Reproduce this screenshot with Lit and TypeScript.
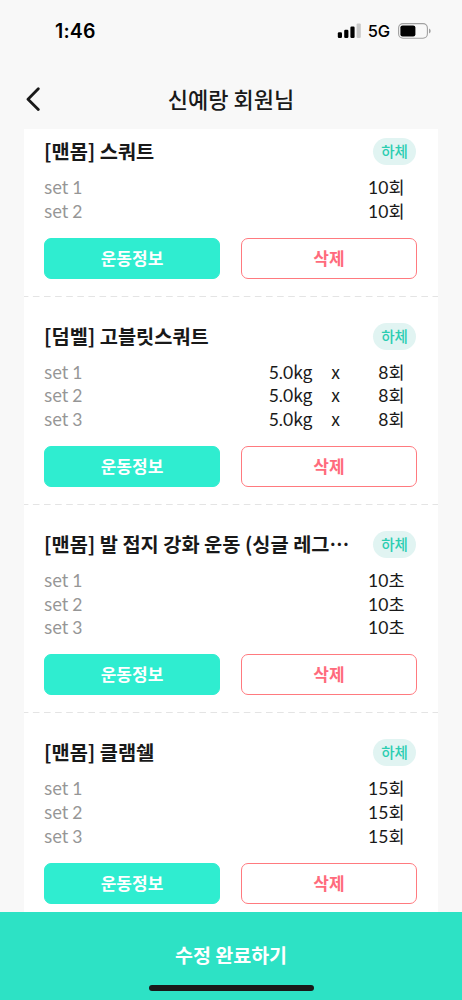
import { LitElement, html, css } from "lit";
import { customElement, property } from "lit/decorators.js";

interface SetRow { weight?: string; count: string; unit: string }
interface Exercise { name: string; tag: string; sets: SetRow[] }

const repeat = (n: number, row: SetRow): SetRow[] => Array.from({ length: n }, () => row);

const EXERCISES: Exercise[] = [
  { name: "[맨몸] 스쿼트", tag: "하체", sets: repeat(2, { count: "10", unit: "회" }) },
  { name: "[덤벨] 고블릿스쿼트", tag: "하체", sets: repeat(3, { weight: "5.0", count: "8", unit: "회" }) },
  { name: "[맨몸] 발 접지 강화 운동 (싱글 레그⋯", tag: "하체", sets: repeat(3, { count: "10", unit: "초" }) },
  { name: "[맨몸] 클램쉘", tag: "하체", sets: repeat(3, { count: "15", unit: "회" }) },
];

@customElement("status-bar")
class StatusBar extends LitElement {
  static styles = css`
    :host { display: flex; height: 62px; align-items: center; padding: 0 31px 0 55px; box-sizing: border-box;
      font-family: Inter, sans-serif; color: #000; }
    .time { font-size: 19.5px; font-weight: 600; flex: 1; letter-spacing: 0.15px; }
    .net { font-size: 16.5px; font-weight: 500; margin: 0 8px 0 7px; letter-spacing: -0.2px; }
    svg { display: block; }
  `;
  render() {
    return html`
      <span class="time">1:46</span>
      <svg width="24" height="16" viewBox="0 0 24 16">
        <rect x="0.8" y="9.3" width="4.2" height="5.7" rx="1.2" />
        <rect x="7.2" y="6.8" width="4.2" height="8.2" rx="1.2" />
        <rect x="13.4" y="3.5" width="4.2" height="11.5" rx="1.2" />
        <rect x="19.6" y="0.4" width="4.2" height="14.6" rx="1.2" fill="#c9c9c9" />
      </svg>
      <span class="net">5G</span>
      <svg width="33" height="16" viewBox="0 0 33 16">
        <rect x="0.6" y="0.6" width="28.8" height="14.6" rx="4.4" fill="none" stroke="#a0a0a0" stroke-width="1.1" />
        <rect x="2.4" y="2.4" width="15" height="11" rx="2.2" />
        <path d="M31 5.4q1.7.8 1.7 2.5T31 10.4z" fill="#a0a0a0" />
      </svg>
    `;
  }
}

@customElement("exercise-item")
class ExerciseItem extends LitElement {
  @property({ attribute: false }) data!: Exercise;
  static styles = css`
    :host { display: block; padding: 26.1px 21px 17px 20px; }
    .head { display: flex; align-items: center; height: 27px; gap: 20px; }
    .name { flex: 1; min-width: 0; white-space: nowrap; font-size: 19.75px; font-weight: 700; line-height: 25px; height: 27px; color: #191919; }
    .tag { width: 43px; height: 27px; margin-right: 1px; border-radius: 14px; background: #e1f4f2; color: #2bcdb1; font-size: 14.5px;
      font-weight: 500; line-height: 25px; text-align: center; }
    .sets { padding: 10px 12.5px 0 0; }
    .row { display: grid; grid-template-columns: 1fr auto 46px 46px; height: 23.55px; line-height: 23.55px; font-size: 17.5px; color: #191919; }
    .num { font-family: Lato, sans-serif; line-height: 1; }
    .label { color: #969696; }
    .x { text-align: center; }
    .amount { text-align: right; }
    .actions { display: grid; grid-template-columns: 1fr 1fr; gap: 21px; margin-top: 15.6px; }
    .btn { box-sizing: border-box; height: 41px; border-radius: 7px; font: inherit; font-size: 17px; font-weight: 700;
      padding: 0 0 2px; border: 1px solid #2fedd0; background: #2fedd0; color: #fff; line-height: 37px; }
    .btn.delete { border-color: #ff7a7f; background: #fff; color: #ff6b7c; }
  `;
  render() {
    const { name, tag, sets } = this.data;
    return html`
      <div class="head"><span class="name">${name}</span><span class="tag">${tag}</span></div>
      <div class="sets">
        ${sets.map((s, i) => html`<div class="row">
          <span class="label">set <span class="num">${i + 1}</span></span>
          <span>${s.weight ? html`<span class="num">${s.weight}</span>kg` : ""}</span>
          <span class="x">${s.weight ? "x" : ""}</span>
          <span class="amount"><span class="num">${s.count}</span>${s.unit}</span>
        </div>`)}
      </div>
      <div class="actions"><button class="btn">운동정보</button><button class="btn delete">삭제</button></div>
    `;
  }
}

@customElement("app-root")
class AppRoot extends LitElement {
  static styles = css`
    :host { display: flex; flex-direction: column; height: 1000px; overflow: hidden; background: #f8f8f8;
      font-family: "Noto Sans CJK KR", sans-serif; color: #191919; }
    .header { display: grid; grid-template-columns: 40px 1fr 40px; align-items: center; height: 67px; padding-top: 5px; box-sizing: border-box; }
    .back { justify-self: end; margin-top: 2px; }
    .title { text-align: center; font-size: 22px; font-weight: 500; line-height: 30px; margin-bottom: 1px; }
    .list { flex: 1; min-height: 0; overflow: hidden; margin: 0 24px; background: #fff; }
    .list exercise-item:first-of-type { padding-top: 9px; }
    .divider { display: block; }
    .footer { height: 88px; box-sizing: border-box; background: #2de2c5; display: flex; flex-direction: column; align-items: center; }
    .submit { font-size: 19.5px; font-weight: 700; line-height: 28px; color: #fff; margin-top: 29px; }
    .home { width: 165px; height: 6px; border-radius: 3px; background: #191919; margin-top: 15.5px; }
  `;
  render() {
    return html`
      <status-bar></status-bar>
      <div class="header">
        <svg class="back" width="16" height="26" viewBox="0 0 16 26" fill="none" stroke="#191919" stroke-width="2.8" stroke-linecap="round" stroke-linejoin="round">
          <path d="M14.3 2.8 4 13.2l10.3 10.4" />
        </svg>
        <span class="title">신예랑 회원님</span>
      </div>
      <div class="list">
        ${EXERCISES.map((e, i) => html`
          ${i ? html`<svg class="divider" width="414" height="1"><path d="M0 .5H414" stroke="#e4e4e4" stroke-dasharray="6.6 4.5" stroke-dashoffset="2.2" /></svg>` : ""}
          <exercise-item .data=${e}></exercise-item>`)}
      </div>
      <div class="footer"><span class="submit">수정 완료하기</span><div class="home"></div></div>
    `;
  }
}
